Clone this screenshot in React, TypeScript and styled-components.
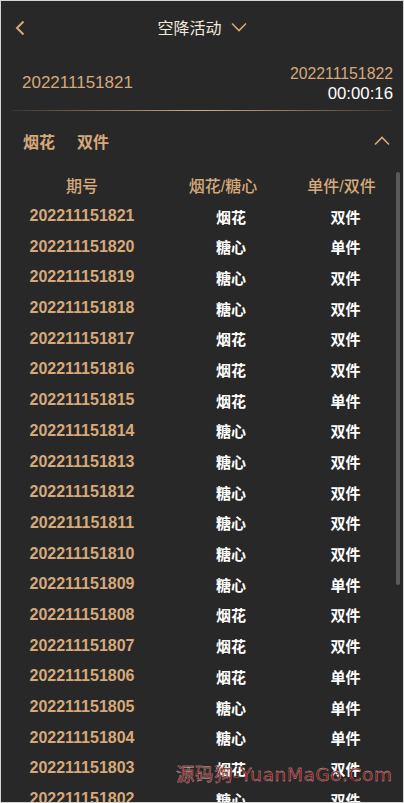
import styled, { createGlobalStyle } from "styled-components";

const GlobalStyle = createGlobalStyle`
  html, body {
    margin: 0;
    padding: 0;
    background: #282828;
  }
  body {
    font-family: "Liberation Sans", "Noto Sans CJK SC", sans-serif;
  }
  * {
    box-sizing: border-box;
  }
`;

const Page = styled.div`
  position: relative;
  width: 404px;
  height: 803px;
  border: 1px solid #d4d4d4;
  background: #282828;
  display: flex;
  flex-direction: column;
  overflow: hidden;
`;

const TopBar = styled.div`
  height: 52px;
  display: flex;
  align-items: center;
  justify-content: center;
  position: relative;
`;

const BackButton = styled.button`
  position: absolute;
  left: 9px;
  top: 16px;
  width: 20px;
  height: 22px;
  padding: 0;
  border: 0;
  background: transparent;
  display: flex;
  align-items: center;
  justify-content: center;
`;

const Title = styled.div`
  display: flex;
  align-items: center;
  gap: 9px;
  color: #f1e8de;
  font-size: 16px;
`;

const InfoRow = styled.div`
  height: 57px;
  display: flex;
  align-items: center;
  justify-content: space-between;
  padding: 0 10px 0 21px;
`;

const Current = styled.div`
  color: #d6a97b;
  font-size: 17px;
  padding-top: 3px;
`;

const Next = styled.div`
  display: flex;
  flex-direction: column;
  align-items: flex-end;
  line-height: 20px;
  padding-top: 4px;
`;

const NextIssue = styled.div`
  color: #d6a97b;
  font-size: 15.8px;
`;

const Countdown = styled.div`
  color: #ffffff;
  font-size: 16.8px;
`;

const Divider = styled.div`
  height: 1px;
  margin: 0 11px;
  background: linear-gradient(
    90deg,
    rgba(214, 169, 123, 0.1) 0%,
    #d6ac80 50%,
    rgba(214, 169, 123, 0.1) 100%
  );
`;

const Latest = styled.div`
  height: 59px;
  display: flex;
  align-items: center;
  justify-content: space-between;
  padding: 0 13px 0 22px;
`;

const LatestText = styled.div`
  display: flex;
  gap: 22px;
  color: #d6a97b;
  font-size: 16px;
  font-weight: 700;
`;

const Table = styled.div`
  position: relative;
  flex: 1;
  overflow: hidden;
`;

const ScrollThumb = styled.div`
  position: absolute;
  right: 3px;
  top: 2px;
  width: 4px;
  height: 413px;
  border-radius: 2px;
  background: #5a5a5a;
`;

const Row = styled.div`
  display: grid;
  grid-template-columns: 162px 136px 1fr;
  height: 30.7px;
  align-items: center;
  padding-right: 7px;
`;

const Cell = styled.div<{ $shift?: number; $tone: "head" | "issue" | "value" }>`
  text-align: center;
  transform: translateX(${(p) => p.$shift ?? 0}px);
  font-size: ${(p) => (p.$tone === "value" ? "15px" : "16px")};
  font-weight: ${(p) => (p.$tone === "head" ? 500 : 700)};
  color: ${(p) => (p.$tone === "value" ? "#ffffff" : "#d6a97b")};
`;

const Watermark = styled.div`
  position: absolute;
  left: 175px;
  top: 759px;
  color: #8e1212;
  font-family: "DejaVu Sans", "Noto Sans CJK SC", sans-serif;
  font-size: 18.5px;
  letter-spacing: 0.6px;
  white-space: nowrap;
  -webkit-text-stroke: 0.3px #c0c0c0;
`;

const rows: [string, string, string][] = [
  ["202211151821", "烟花", "双件"],
  ["202211151820", "糖心", "单件"],
  ["202211151819", "糖心", "双件"],
  ["202211151818", "糖心", "双件"],
  ["202211151817", "烟花", "双件"],
  ["202211151816", "烟花", "双件"],
  ["202211151815", "烟花", "单件"],
  ["202211151814", "糖心", "双件"],
  ["202211151813", "糖心", "双件"],
  ["202211151812", "糖心", "双件"],
  ["202211151811", "糖心", "双件"],
  ["202211151810", "糖心", "双件"],
  ["202211151809", "糖心", "单件"],
  ["202211151808", "烟花", "双件"],
  ["202211151807", "烟花", "双件"],
  ["202211151806", "烟花", "单件"],
  ["202211151805", "糖心", "单件"],
  ["202211151804", "糖心", "单件"],
  ["202211151803", "烟花", "双件"],
  ["202211151802", "糖心", "双件"],
];

function Chevron({ dir }: { dir: "left" | "down" | "up" }) {
  if (dir === "left") {
    return (
      <svg width="10" height="16" viewBox="0 0 10 16">
        <path d="M8.5 1.5 L2 8 L8.5 14.5" fill="none" stroke="#d6a97b" strokeWidth="2" />
      </svg>
    );
  }
  const d = dir === "down" ? "M1 1.5 L8 8.5 L15 1.5" : "M1 8.5 L8 1.5 L15 8.5";
  return (
    <svg width="16" height="10" viewBox="0 0 16 10">
      <path d={d} fill="none" stroke="#d6a97b" strokeWidth="1.6" />
    </svg>
  );
}

export default function App() {
  return (
    <>
      <GlobalStyle />
      <Page>
        <TopBar>
          <BackButton>
            <Chevron dir="left" />
          </BackButton>
          <Title>
            空降活动
            <Chevron dir="down" />
          </Title>
        </TopBar>
        <InfoRow>
          <Current>202211151821</Current>
          <Next>
            <NextIssue>202211151822</NextIssue>
            <Countdown>00:00:16</Countdown>
          </Next>
        </InfoRow>
        <Divider />
        <Latest>
          <LatestText>
            <span>烟花</span>
            <span>双件</span>
          </LatestText>
          <Chevron dir="up" />
        </Latest>
        <Table>
          <Row>
            <Cell $tone="head">期号</Cell>
            <Cell $tone="head" $shift={-8}>
              烟花/糖心
            </Cell>
            <Cell $tone="head" $shift={-6}>
              单件/双件
            </Cell>
          </Row>
          {rows.map(([issue, kind, size]) => (
            <Row key={issue}>
              <Cell $tone="issue">{issue}</Cell>
              <Cell $tone="value">{kind}</Cell>
              <Cell $tone="value" $shift={-2}>
                {size}
              </Cell>
            </Row>
          ))}
          <ScrollThumb />
        </Table>
        <Watermark>源码狗-YuanMaGo.Com</Watermark>
      </Page>
    </>
  );
}
